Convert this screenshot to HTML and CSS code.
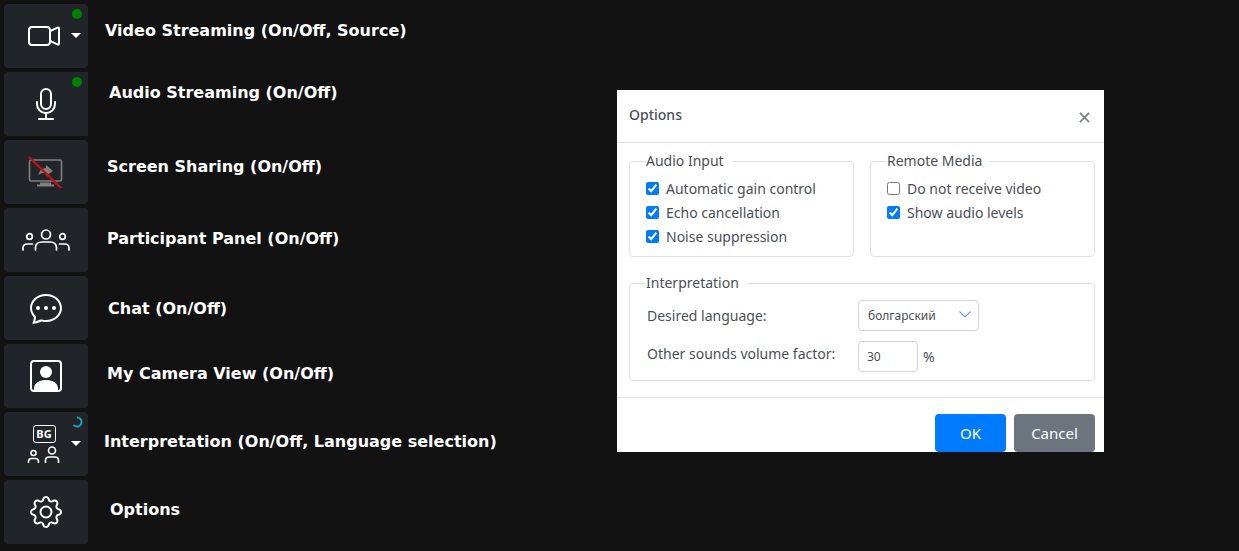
FILE: index.html
```html
<!DOCTYPE html>
<html lang="en">
<head>
  <meta charset="UTF-8">
  <meta name="viewport" content="width=device-width, initial-scale=1.0">
  <title>Options</title>
  <link rel="stylesheet" href="styles.css">
</head>
<body>
  <div class="toolbar">
    <div class="row">
      <div class="tile has-caret">
        <span class="dot"></span>
        <svg class="icon" viewBox="0 0 16 16" fill="#fff"><path d="M0 5a2 2 0 0 1 2-2h7.5a2 2 0 0 1 1.983 1.738l3.11-1.382A1 1 0 0 1 16 4.269v7.462a1 1 0 0 1-1.406.913l-3.111-1.382A2 2 0 0 1 9.5 13H2a2 2 0 0 1-2-2V5zm11.5 5.175 3.5 1.556V4.269l-3.5 1.556v4.35zM2 4a1 1 0 0 0-1 1v6a1 1 0 0 0 1 1h7.5a1 1 0 0 0 1-1V5a1 1 0 0 0-1-1H2z"/></svg>
        <span class="caret"></span>
      </div>
      <span class="label label-video">Video Streaming (On/Off, Source)</span>
    </div>
    <div class="row">
      <div class="tile tile-flat">
        <span class="dot"></span>
        <svg class="icon" viewBox="0 0 16 16" fill="#fff"><path d="M3.5 6.5A.5.5 0 0 1 4 7v1a4 4 0 0 0 8 0V7a.5.5 0 0 1 1 0v1a5 5 0 0 1-4.5 4.975V15h3a.5.5 0 0 1 0 1h-7a.5.5 0 0 1 0-1h3v-2.025A5 5 0 0 1 3 8V7a.5.5 0 0 1 .5-.5z"/><path d="M10 8a2 2 0 1 1-4 0V3a2 2 0 1 1 4 0v5zM8 0a3 3 0 0 0-3 3v5a3 3 0 0 0 6 0V3a3 3 0 0 0-3-3z"/></svg>
      </div>
      <span class="label label-audio">Audio Streaming (On/Off)</span>
    </div>
    <div class="row">
      <div class="tile">
        <svg class="icon icon-share" viewBox="0 0 36 32">
          <rect x="1.5" y="4" width="32" height="21" rx="1.5" fill="none" stroke="#808080" stroke-width="1.6"/>
          <path d="M12 27.5h11M9 29.5h17" stroke="#808080" stroke-width="2" fill="none"/>
          <path d="M10 19l3-6 5-1v-3l7 6-7 5v-3l-4 0z" fill="#808080"/>
          <path d="M1 1l33 32" stroke="#c40f12" stroke-width="2.4"/>
        </svg>
      </div>
      <span class="label label-screen">Screen Sharing (On/Off)</span>
    </div>
    <div class="row">
      <div class="tile">
        <svg class="icon icon-people" viewBox="0 0 48 24" fill="none" stroke="#fff" stroke-width="1.7" stroke-linecap="round">
          <circle cx="24" cy="6.5" r="4.5"/>
          <path d="M13.5 22v-2.5c0-3.5 3-5.5 6-5.5h9c3 0 6 2 6 5.5V22"/>
          <circle cx="7.5" cy="8.5" r="2.8"/>
          <path d="M1 22v-2c0-2.5 2-4 4.500-4h5"/>
          <circle cx="40.500" cy="8.500" r="2.800"/>
          <path d="M47 22v-2c0-2.500-2-4-4.500-4h-5"/>
        </svg>
      </div>
      <span class="label label-panel">Participant Panel (On/Off)</span>
    </div>
    <div class="row">
      <div class="tile">
        <svg class="icon" viewBox="0 0 16 16" fill="#fff"><path d="M5 8a1 1 0 1 1-2 0 1 1 0 0 1 2 0zm4 0a1 1 0 1 1-2 0 1 1 0 0 1 2 0zm3 1a1 1 0 1 0 0-2 1 1 0 0 0 0 2z"/><path d="m2.165 15.803.02-.004c1.83-.363 2.948-.842 3.468-1.105A9.06 9.06 0 0 0 8 15c4.418 0 8-3.134 8-7s-3.582-7-8-7-8 3.134-8 7c0 1.76.743 3.37 1.97 4.6a10.437 10.437 0 0 1-.524 2.318l-.003.011a10.722 10.722 0 0 1-.244.637c-.079.186.074.394.273.362a21.673 21.673 0 0 0 .693-.125zm.8-3.108a1 1 0 0 0-.287-.801C1.618 10.83 1 9.468 1 8c0-3.192 3.004-6 7-6s7 2.808 7 6c0 3.193-3.004 6-7 6a8.06 8.06 0 0 1-2.088-.272 1 1 0 0 0-.711.074c-.387.196-1.24.57-2.634.893a10.97 10.97 0 0 0 .398-2z"/></svg>
      </div>
      <span class="label label-chat">Chat (On/Off)</span>
    </div>
    <div class="row">
      <div class="tile">
        <svg class="icon" viewBox="0 0 16 16" fill="#fff"><path d="M11 6a3 3 0 1 1-6 0 3 3 0 0 1 6 0z"/><path d="M2 0a2 2 0 0 0-2 2v12a2 2 0 0 0 2 2h12a2 2 0 0 0 2-2V2a2 2 0 0 0-2-2H2zm12 1a1 1 0 0 1 1 1v12a1 1 0 0 1-1 1v-1c0-1-1-4-6-4s-6 3-6 4v1a1 1 0 0 1-1-1V2a1 1 0 0 1 1-1h12z"/></svg>
      </div>
      <span class="label label-camera">My Camera View (On/Off)</span>
    </div>
    <div class="row">
      <div class="tile has-caret">
        <svg class="spinner" viewBox="0 0 12 12" fill="none"><path d="M6 1.500a4.500 4.500 0 0 1 0 9" stroke="#17a2b8" stroke-width="2"/><path d="M6 10.500a4.500 4.500 0 0 1-3.500-1.700" stroke="#17a2b8" stroke-width="2"/></svg>
        <div class="interp">
          <span class="lang-badge">BG</span>
          <svg class="interp-people" viewBox="0 0 34 18" fill="none" stroke="#fff" stroke-width="1.600">
            <circle cx="6.500" cy="7" r="2.500"/>
            <path d="M1.500 17v-1.500c0-2 1.500-3 3-3h4c1.500 0 3 1 3 3V17"/>
            <circle cx="25" cy="4.500" r="3.500"/>
            <path d="M18.500 17v-2.500c0-2 1.500-3.500 3.500-3.500h6c2 0 3.500 1.500 3.500 3.500V17"/>
          </svg>
        </div>
        <span class="caret"></span>
      </div>
      <span class="label label-interp">Interpretation (On/Off, Language selection)</span>
    </div>
    <div class="row">
      <div class="tile">
        <svg class="icon" viewBox="0 0 16 16" fill="#fff"><path d="M8 4.754a3.246 3.246 0 1 0 0 6.492 3.246 3.246 0 0 0 0-6.492zM5.754 8a2.246 2.246 0 1 1 4.492 0 2.246 2.246 0 0 1-4.492 0z"/><path d="M9.796 1.343c-.527-1.79-3.065-1.79-3.592 0l-.094.319a.873.873 0 0 1-1.255.52l-.292-.16c-1.64-.892-3.433.902-2.54 2.541l.159.292a.873.873 0 0 1-.52 1.255l-.319.094c-1.79.527-1.79 3.065 0 3.592l.319.094a.873.873 0 0 1 .52 1.255l-.16.292c-.892 1.64.901 3.434 2.541 2.54l.292-.159a.873.873 0 0 1 1.255.52l.094.319c.527 1.79 3.065 1.79 3.592 0l.094-.319a.873.873 0 0 1 1.255-.52l.292.16c1.64.893 3.434-.902 2.54-2.541l-.159-.292a.873.873 0 0 1 .52-1.255l.319-.094c1.79-.527 1.79-3.065 0-3.592l-.319-.094a.873.873 0 0 1-.52-1.255l.16-.292c.893-1.64-.902-3.433-2.541-2.54l-.292.159a.873.873 0 0 1-1.255-.52l-.094-.319zm-2.633.283c.246-.835 1.428-.835 1.674 0l.094.319a1.873 1.873 0 0 0 2.693 1.115l.291-.16c.764-.415 1.6.42 1.184 1.185l-.159.292a1.873 1.873 0 0 0 1.116 2.692l.318.094c.835.246.835 1.428 0 1.674l-.319.094a1.873 1.873 0 0 0-1.115 2.693l.16.291c.415.764-.42 1.6-1.185 1.184l-.291-.159a1.873 1.873 0 0 0-2.693 1.116l-.094.318c-.246.835-1.428.835-1.674 0l-.094-.319a1.873 1.873 0 0 0-2.692-1.115l-.292.16c-.764.415-1.6-.42-1.184-1.185l.159-.291A1.873 1.873 0 0 0 1.945 8.93l-.319-.094c-.835-.246-.835-1.428 0-1.674l.319-.094A1.873 1.873 0 0 0 3.06 4.377l-.16-.292c-.415-.764.42-1.6 1.185-1.184l.292.159a1.873 1.873 0 0 0 2.692-1.115l.094-.319z"/></svg>
      </div>
      <span class="label label-options">Options</span>
    </div>
  </div>

  <div class="modal">
    <div class="modal-header">
      <span class="modal-title">Options</span>
      <svg class="close" viewBox="0 0 12 12" fill="none" stroke="#808589" stroke-width="2"><path d="M1 1l10 10M11 1L1 11"/></svg>
    </div>
    <div class="modal-body">
      <div class="two-cols">
        <fieldset class="group">
          <legend>Audio Input</legend>
          <label class="check"><input type="checkbox" checked>Automatic gain control</label>
          <label class="check"><input type="checkbox" checked>Echo cancellation</label>
          <label class="check"><input type="checkbox" checked>Noise suppression</label>
        </fieldset>
        <fieldset class="group">
          <legend>Remote Media</legend>
          <label class="check"><input type="checkbox">Do not receive video</label>
          <label class="check"><input type="checkbox" checked>Show audio levels</label>
        </fieldset>
      </div>
      <fieldset class="group group-interp">
        <legend>Interpretation</legend>
        <div class="field">
          <span class="field-label">Desired language:</span>
          <div class="select">
            <span>болгарский</span>
            <svg class="chevron" viewBox="0 0 12 7" fill="none" stroke="#5aa5f5" stroke-width="1.100"><path d="M.5.5L6 6l5.500-5.500"/></svg>
          </div>
        </div>
        <div class="field field-volume">
          <span class="field-label">Other sounds volume factor:</span>
          <div class="number">30</div>
          <span class="unit">%</span>
        </div>
      </fieldset>
    </div>
    <div class="modal-footer">
      <button class="btn btn-ok">OK</button>
      <button class="btn btn-cancel">Cancel</button>
    </div>
  </div>
</body>
</html>
```

FILE: styles.css
```css
html, body {
  height: 100%;
}

body {
  margin: 0;
  background: #121212;
  font-family: "Noto Sans", sans-serif;
  overflow: hidden;
}

.toolbar {
  display: flex;
  flex-direction: column;
  gap: 4px;
  padding: 4px;
}

.row {
  display: flex;
  align-items: center;
  height: 64px;
}

.tile {
  position: relative;
  display: flex;
  align-items: center;
  justify-content: center;
  flex: none;
  width: 84px;
  height: 64px;
  background: #212529;
  border-radius: 4px;
}

.tile-flat {
  border-radius: 4px 0 0 4px;
}

.has-caret {
  padding-right: 4px;
  box-sizing: border-box;
}

.icon {
  width: 32px;
  height: 32px;
}

.icon-share {
  width: 36px;
  height: 32px;
}

.icon-people {
  width: 48px;
  height: 24px;
}

.dot {
  position: absolute;
  top: 5px;
  right: 6px;
  width: 10px;
  height: 10px;
  background: #008000;
  border-radius: 50%;
}

.caret {
  position: absolute;
  top: 29px;
  right: 7px;
  border-top: 5px solid #fff;
  border-left: 5px solid transparent;
  border-right: 5px solid transparent;
}

.spinner {
  position: absolute;
  top: 4px;
  right: 5px;
  width: 12px;
  height: 12px;
}

.interp {
  display: flex;
  flex-direction: column;
  align-items: center;
  gap: 3px;
}

.lang-badge {
  display: block;
  width: 21px;
  height: 16px;
  border: 1px solid #fff;
  border-radius: 3px;
  color: #fff;
  font-size: 11px;
  font-weight: 700;
  line-height: 16px;
  text-align: center;
}

.interp-people {
  width: 34px;
  height: 18px;
}

.label {
  color: #fff;
  font-family: "DejaVu Sans", sans-serif;
  font-size: 16px;
  font-weight: 700;
  white-space: nowrap;
}

.label-video { margin: 0 0 12px 17px; }
.label-audio { margin: 0 0 24px 21px; }
.label-screen { margin: 0 0 12px 19px; }
.label-panel { margin: 0 0 4px 19px; }
.label-chat { margin: 0 0 0 20px; }
.label-camera { margin: 0 0 6px 19px; }
.label-interp { margin: 0 0 6px 16px; }
.label-options { margin: 0 0 6px 22px; }

.modal {
  position: absolute;
  top: 90px;
  left: 617px;
  display: flex;
  flex-direction: column;
  width: 487px;
  height: 362px;
  background: #fff;
  color: #495057;
}

.modal-header {
  display: flex;
  align-items: center;
  justify-content: space-between;
  flex: none;
  box-sizing: border-box;
  height: 53px;
  padding: 0 12px;
  border-bottom: 1px solid #dee2e6;
}

.modal-title {
  font-size: 14px;
  font-weight: 500;
  margin-top: -3px;
}

.close {
  width: 11px;
  height: 11px;
  margin: 2px 2px 0 0;
}

.modal-body {
  flex: 1;
  display: flex;
  flex-direction: column;
  gap: 16px;
  padding: 8px 9px 16px 12px;
}

.two-cols {
  display: flex;
  gap: 16px;
}

.group {
  flex: 1;
  min-width: 0;
  margin: 0;
  padding: 0 16px;
  border: 1px solid #dee2e6;
  border-radius: 4px;
  font-size: 14px;
}

.two-cols .group {
  height: 106px;
  box-sizing: border-box;
  padding-top: 5px;
}

.group legend {
  padding: 0 8px 0 0;
  font-size: 14px;
  line-height: 20px;
}

.check {
  display: flex;
  align-items: center;
  height: 24px;
}

.check input {
  width: 13px;
  height: 13px;
  margin: 0 7px 0 0;
  accent-color: #007bff;
}

.group-interp {
  flex: none;
  box-sizing: border-box;
  height: 108px;
  padding-top: 7px;
}

.field {
  display: flex;
  align-items: center;
  margin-left: 1px;
}

.field-volume {
  margin-top: 10px;
}

.field-label {
  flex: none;
  width: 211px;
}

.field-volume .field-label {
  margin-top: -6px;
}

.select {
  display: flex;
  align-items: center;
  justify-content: space-between;
  box-sizing: border-box;
  width: 121px;
  height: 31px;
  padding: 0 7px 0 9px;
  border: 1px solid #ced4da;
  border-radius: 4px;
  font-size: 12px;
}

.chevron {
  width: 12px;
  height: 7px;
  margin-bottom: 2px;
}

.number {
  box-sizing: border-box;
  width: 60px;
  height: 31px;
  padding-left: 8px;
  border: 1px solid #ced4da;
  border-radius: 4px;
  font-size: 12px;
  line-height: 29px;
}

.unit {
  margin-left: 5px;
}

.modal-footer {
  display: flex;
  justify-content: flex-end;
  gap: 8px;
  flex: none;
  box-sizing: border-box;
  height: 63px;
  padding: 16px 9px 8px;
  border-top: 1px solid #dee2e6;
}

.btn {
  height: 38px;
  border: none;
  border-radius: 4px;
  color: #fff;
  font-family: inherit;
  font-size: 15px;
}

.btn-ok {
  width: 71px;
  background: #007bff;
}

.btn-cancel {
  width: 81px;
  background: #6c757d;
}
```
